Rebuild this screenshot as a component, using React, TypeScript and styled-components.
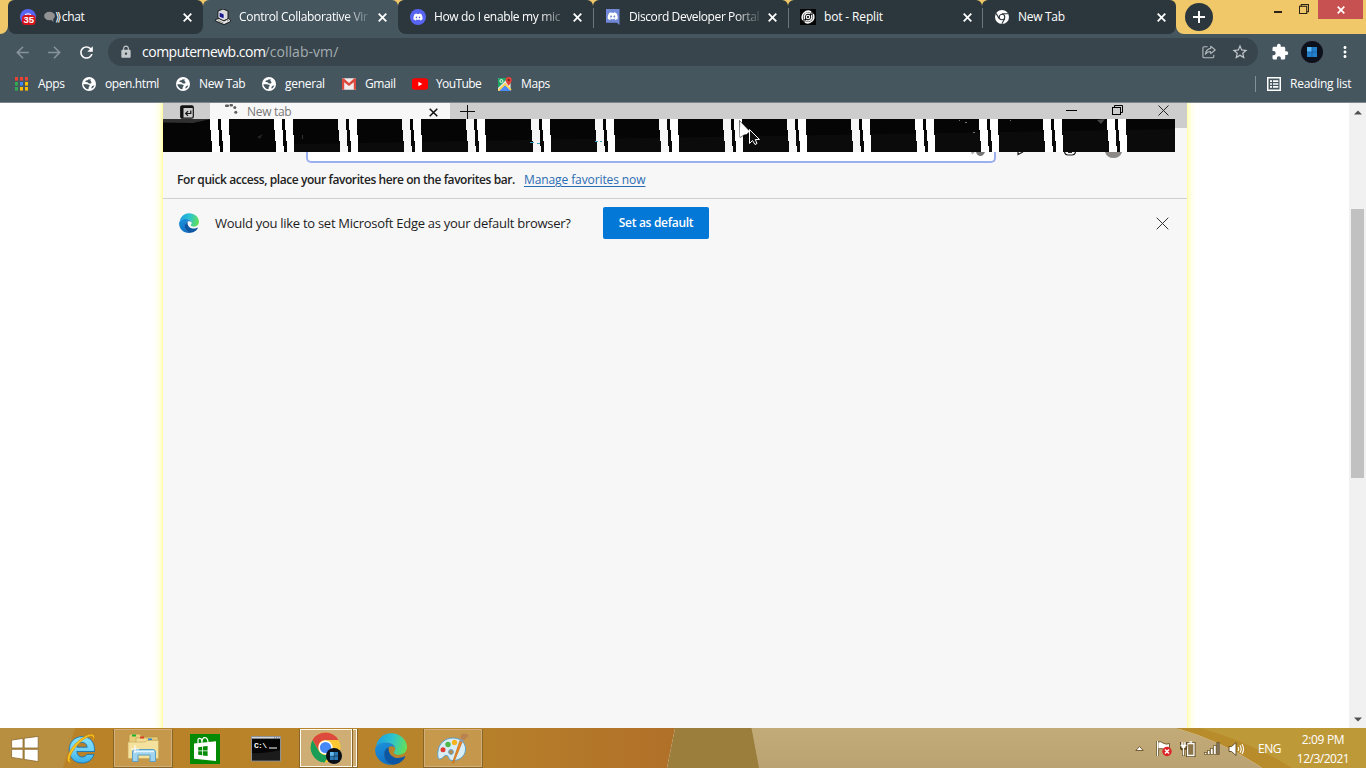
import React from "react";
import styled, { createGlobalStyle, css } from "styled-components";
import { FaDiscord } from "react-icons/fa";
import { MdArrowBack, MdArrowForward, MdRefresh, MdLock, MdStarBorder, MdExtension, MdMoreVert } from "react-icons/md";

const GlobalStyle = createGlobalStyle`
  *, *::before, *::after { box-sizing: border-box; }
  html, body { margin: 0; padding: 0; }
  body {
    width: 1366px;
    height: 768px;
    overflow: hidden;
    font-family: "Open Sans", "Noto Sans", sans-serif;
    font-size: 12px;
    color: #fff;
  }
  svg { display: block; flex: none; }
`;

const Screen = styled.div`
  width: 1366px;
  height: 768px;
  display: flex;
  flex-direction: column;
  overflow: hidden;
  background: #fff;
`;

/* ---------- shared text ---------- */

const Label = styled.span<{ $w?: number; $track?: number; $size?: number; $color?: string; $weight?: number }>`
  display: block;
  flex: none;
  white-space: nowrap;
  line-height: 18px;
  width: ${(p) => (p.$w ? `${p.$w}px` : "auto")};
  letter-spacing: ${(p) => p.$track ?? -0.3}px;
  font-size: ${(p) => p.$size ?? 12}px;
  font-weight: ${(p) => p.$weight ?? 400};
  color: ${(p) => p.$color ?? "#fff"};
`;

/* ---------- tab strip ---------- */

const Strip = styled.header`
  height: 34px;
  flex: none;
  display: flex;
  background: linear-gradient(#f0c869, #f0c869) 0 0 / 100% 26px no-repeat, #45565f;
`;

const StripEdge = styled.div<{ $side: "left" | "right" }>`
  height: 34px;
  background: #f0c869;
  ${(p) =>
    p.$side === "left"
      ? css`width: 8px; flex: none; border-bottom-right-radius: 8px;`
      : css`flex: 1; border-bottom-left-radius: 8px; display: flex; align-items: flex-start;`}
`;

const TabBox = styled.div<{ $w: number; $active?: boolean; $edges?: string; $sep?: boolean }>`
  position: relative;
  width: ${(p) => p.$w}px;
  height: 34px;
  flex: none;
  padding-left: 12px;
  display: flex;
  align-items: center;
  background: ${(p) => (p.$active ? "#45565f" : "#2c373d")};
  border-radius: 6px 6px ${(p) => p.$edges ?? "0 0"};
  &::before {
    content: "";
    position: absolute;
    left: 0;
    top: 8px;
    width: 1px;
    height: 20px;
    background: ${(p) => (p.$sep ? "#6b767c" : "transparent")};
  }
`;

const TabIcon = styled.div`
  width: 24px;
  flex: none;
`;

const TabTitle = styled.div<{ $fade?: boolean }>`
  width: 139px;
  display: flex;
  align-items: center;
  flex: none;
  ${(p) => p.$fade && css`mask-image: linear-gradient(90deg, #000 106px, transparent 134px);`}
`;

const NewTabButton = styled.div`
  width: 28px;
  height: 28px;
  margin: 3px 0 0 9px;
  border-radius: 50%;
  background: #2c373d;
  display: flex;
  align-items: center;
  justify-content: center;
`;

const WindowButtons = styled.div`
  margin-left: auto;
  display: flex;
  align-items: flex-start;
`;

const WinClose = styled.div`
  width: 45px;
  height: 19px;
  margin-right: 3px;
  background: #c75050;
  display: flex;
  align-items: center;
  justify-content: center;
`;

/* ---------- toolbar ---------- */

const Toolbar = styled.div`
  height: 34px;
  flex: none;
  background: #45565f;
  display: flex;
  align-items: center;
  padding: 2px 12px 0 13px;
`;

const NavIcon = styled.div<{ $dim?: boolean; $gap?: number }>`
  width: 18px;
  height: 18px;
  margin-right: ${(p) => p.$gap ?? 14}px;
  color: ${(p) => (p.$dim ? "#87939a" : "#fff")};
  flex: none;
`;

const Omnibox = styled.div`
  width: 1150px;
  height: 28px;
  flex: none;
  margin-right: 13px;
  padding: 0 9px 0 11px;
  border-radius: 14px;
  background: #38454c;
  display: flex;
  align-items: center;
  color: #c3c8cb;
`;

const UrlText = styled.div`
  margin-left: 9px;
  display: flex;
`;

const OmniboxActions = styled.div`
  margin-left: auto;
  display: flex;
  align-items: center;
  gap: 15px;
`;

const Avatar = styled.div`
  width: 22px;
  height: 22px;
  margin: 0 13px 0 12px;
  border-radius: 50%;
  background: #0d111b;
  display: flex;
  align-items: center;
  justify-content: center;
`;

const Bookmarks = styled.nav`
  height: 35px;
  flex: none;
  background: #45565f;
  border-bottom: 1px solid #7b868c;
  display: flex;
  align-items: center;
  padding: 0 14px 2px 15px;
`;

const BookmarkIcon = styled.div<{ $after: number }>`
  flex: none;
  margin-right: ${(p) => p.$after}px;
`;

const ReadingList = styled.div`
  margin-left: auto;
  display: flex;
  align-items: center;
  height: 16px;
  padding-left: 11px;
  border-left: 1px solid #84919a;
`;

/* ---------- page with the remote display ---------- */

const Page = styled.main`
  height: 625px;
  flex: none;
  display: flex;
  justify-content: space-between;
  overflow: hidden;
  background: #fff;
`;

const Remote = styled.section`
  width: 1024px;
  margin-left: 163px;
  height: 640px;
  background: #f7f7f7;
  box-shadow: 0 0 2px 1px #ffffa0, 0 0 8px 2px #ffffb0;
  display: flex;
  flex-direction: column;
  color: #1b1b1b;
`;

const RemoteTitle = styled.div`
  height: 16px;
  flex: none;
  display: flex;
  background: #cdcdcd;
  overflow: hidden;
`;

const RemotePin = styled.div`
  width: 47px;
  padding: 2px 0 0 17px;
`;

const RemoteTab = styled.div`
  width: 240px;
  background: #f7f7f7;
  display: flex;
  padding: 0 12px 0 14px;
`;

const RemoteTabIcon = styled.div`
  width: 23px;
`;

const RemoteTabClose = styled.div`
  margin: 5px 0 0 auto;
`;

const RemotePlus = styled.div`
  padding: 2px 0 0 10px;
`;

const RemoteWindow = styled.div`
  margin-left: auto;
  display: flex;
  padding-right: 18px;
  gap: 35px;
`;

const GlitchRow = styled.div`
  height: 33px;
  flex: none;
  background: linear-gradient(#cdcdcd, #cdcdcd) 0 0 / 100% 9px no-repeat;
`;

const AddressRow = styled.div`
  height: 15px;
  flex: none;
  display: flex;
  padding-left: 143px;
`;

const AddressField = styled.div`
  width: 690px;
  height: 11px;
  background: #fff;
  border: 2px solid #9cb0f0;
  border-top: 0;
  border-radius: 0 0 5px 5px;
  display: flex;
  justify-content: flex-end;
  padding-right: 9px;
`;

const AddressIcons = styled.div`
  margin-left: 20px;
`;

const FavoritesRow = styled.div`
  height: 32px;
  flex: none;
  padding: 4px 0 0 14px;
  display: flex;
  border-bottom: 1px solid #cfcfcf;
`;

const Link = styled(Label)`
  text-decoration: underline;
  text-decoration-thickness: 1px;
  text-underline-offset: 2px;
`;

const Prompt = styled.div`
  height: 48px;
  flex: none;
  padding: 0 18px 0 16px;
  display: flex;
  align-items: center;
`;

const PromptIcon = styled.div`
  width: 36px;
`;

const PromptText = styled(Label)`
  padding-bottom: 1px;
`;

const DefaultButton = styled.button`
  width: 106px;
  height: 32px;
  margin-left: 32px;
  padding: 0;
  border: 0;
  border-radius: 2px;
  background: #0478d7;
  font-family: inherit;
  display: flex;
  justify-content: center;
  align-items: center;
`;

const PromptClose = styled.div`
  margin-left: auto;
`;

const Scrollbar = styled.div`
  width: 17px;
  height: 625px;
  background: #f1f1f1;
  display: flex;
  flex-direction: column;
  align-items: center;
  padding: 7px 0 6px;
`;

const Thumb = styled.div`
  width: 13px;
  height: 269px;
  margin-top: 94px;
  margin-bottom: auto;
  background: #c1c1c1;
`;

/* ---------- taskbar ---------- */

const Taskbar = styled.footer`
  position: relative;
  z-index: 0;
  height: 40px;
  flex: none;
  display: flex;
  align-items: stretch;
  border-top: 1px solid rgba(90, 55, 10, 0.4);
`;

const Backdrop = styled.svg`
  position: absolute;
  z-index: -1;
  left: 0;
  top: -1px;
`;

const TaskItem = styled.div<{ $w: number; $before?: number; $look?: "open" | "front" }>`
  width: ${(p) => p.$w}px;
  margin-left: ${(p) => p.$before ?? 0}px;
  flex: none;
  display: flex;
  align-items: center;
  justify-content: center;
  ${(p) =>
    p.$look === "open" &&
    css`
      background: rgba(215, 180, 120, 0.45);
      border: 1px solid #8b6526;
      border-top: 0;
      box-shadow: inset 0 0 0 1px #cfae78;
    `}
  ${(p) =>
    p.$look === "front" &&
    css`
      background: #cfae76;
      border: 1px solid #8b6526;
      border-top: 0;
      box-shadow: inset 0 0 0 1px #fdf8ec;
    `}
`;

const TaskStack = styled.div`
  width: 5px;
  border: 1px solid #8b6526;
  border-left: 0;
  border-top: 0;
  box-shadow: inset -1px 0 0 #fdf8ec, inset 0 1px 0 #fdf8ec, inset 0 -1px 0 #fdf8ec;
  background: #cfae76;
`;

const Tray = styled.div`
  margin-left: auto;
  display: flex;
  align-items: center;
`;

const TrayIcon = styled.div<{ $w: number }>`
  width: ${(p) => p.$w}px;
`;

const Clock = styled.div`
  width: 86px;
  height: 36px;
  display: flex;
  flex-direction: column;
  align-items: center;
  justify-content: space-between;
`;

const ClockLine = styled(Label)`
  line-height: 17px;
`;

/* ---------- drawings ---------- */

const Cross = ({ s = 9, w = 1.8, c = "#fff" }: { s?: number; w?: number; c?: string }) => (
  <svg width={s} height={s} viewBox={`0 0 ${s} ${s}`}>
    <path d={`M.7 .7L${s - 0.7} ${s - 0.7}M${s - 0.7} .7L.7 ${s - 0.7}`} stroke={c} strokeWidth={w} />
  </svg>
);

const ChatFavicon = () => (
  <svg width="16" height="16" viewBox="0 0 16 16">
    <circle cx="8" cy="8" r="8" fill="#5865f2" />
    <path d="M5 5.5Q8 4 11 5.5" stroke="#fff" fill="none" />
    <rect x="2" y="6" width="13.5" height="10" rx="3.5" fill="#d8131c" />
    <text x="8.8" y="14.3" textAnchor="middle" fontSize="9.5" fontWeight="700" fill="#fff" fontFamily="Liberation Sans, sans-serif">35</text>
  </svg>
);

const SpeechBubble = () => (
  <svg width="11" height="12" viewBox="0 0 11 12">
    <ellipse cx="5.5" cy="5" rx="5.4" ry="4.2" fill="#929292" />
    <path d="M6 8L9.5 11L9 7.5Z" fill="#929292" />
  </svg>
);

const ComputerIcon = () => (
  <svg width="16" height="16" viewBox="0 0 16 16">
    <path d="M3 2L8 0L13 2V10L8 12L3 9Z" fill="#d9d9d9" stroke="#111" strokeWidth=".9" />
    <path d="M4.2 3.2L9 5V9.8L4.2 8Z" fill="#1b1b8c" stroke="#fff" strokeWidth=".6" />
    <path d="M.6 10.5L4 9.5L9 12L13.5 9.5L15.5 11V12.5L9 15.6L.6 12Z" fill="#e8e8e8" stroke="#111" strokeWidth=".9" />
    <path d="M3 11.5L8.5 14M12 12L14 11" stroke="#777" strokeWidth=".8" />
  </svg>
);

const DiscordRound = () => (
  <svg width="16" height="16" viewBox="0 0 16 16">
    <circle cx="8" cy="8" r="8" fill="#5865f2" />
    <FaDiscord x={3} y={3} width={10} height={10} size={10} color="#fff" />
  </svg>
);

const DiscordSquare = () => (
  <svg width="16" height="16" viewBox="0 0 16 16">
    <path d="M1 0H14.5V16L11.8 13.7H1Z" fill="#7289da" />
    <FaDiscord x={2.2} y={1.7} width={11} height={11} size={11} color="#fff" />
  </svg>
);

const ReplitIcon = () => (
  <svg width="16" height="16" viewBox="0 0 16 16">
    <rect width="16" height="16" fill="#050505" />
    <g fill="none" stroke="#f4f4f4" strokeWidth="1.5" strokeLinecap="round">
      <circle cx="8" cy="8" r="1.7" strokeWidth="1.2" />
      <path d="M4.4 9.6A4 4 0 0 1 9.6 4.4M11.6 6.4A4 4 0 0 1 6.4 11.6" />
      <path d="M2.6 10.6A6.2 6.2 0 0 1 10.600 2.600M13.4 5.4A6.2 6.2 0 0 1 5.400 13.400" />
      <path d="M12.200 4.200Q11 4.200 10 3.600M3.800 11.800Q5 11.800 6 12.400" strokeWidth="1" />
    </g>
  </svg>
);

const ChromeMono = () => (
  <svg width="16" height="14" viewBox="0 0 16 14">
    <circle cx="8" cy="7" r="7" fill="#fff" />
    <circle cx="8" cy="7" r="2.75" fill="#fff" stroke="#2c373d" strokeWidth="1.1" />
    <path d="M8 3.8H14.2M5.2 8.6L2.1 3.4M10.8 8.6L7.8 13.9" stroke="#2c373d" strokeWidth="1.1" />
  </svg>
);

const AppsGrid = () => {
  const colors = ["#ea4335", "#ea4335", "#ea4335", "#34a853", "#4285f4", "#fbbc05", "#34a853", "#fbbc05", "#fbbc05"];
  return (
    <svg width="13" height="14" viewBox="0 0 13 14">
      {colors.map((c, i) => (
        <rect key={i} x={(i % 3) * 5} y={Math.floor(i / 3) * 5} width="3" height="3.6" fill={c} />
      ))}
    </svg>
  );
};

const Globe = () => (
  <svg width="14" height="14" viewBox="0 0 14 14">
    <circle cx="7" cy="7" r="7" fill="#fff" />
    <path d="M8.800 2.200L6.300 2.400Q5.800 3.400 4 3.600Q3 4.400 3.600 5Q5.800 4.800 6.200 6Q7.800 7 9.200 6.300Q10 5.600 9 4.600Q7.900 3.700 8.800 2.200Z" fill="#45565f" />
    <path d="M1.300 7.200H4.800Q7.600 7.500 7.800 8.600Q7.700 9.400 6.800 9.700L6.500 12.300Q2.400 11.900 1.300 7.200Z" fill="#45565f" />
    <path d="M9.800 9.600Q11 8.500 12.400 8.600Q11.600 10.700 9.800 11.800Q9 10.700 9.800 9.600Z" fill="#45565f" />
  </svg>
);

const GmailIcon = () => (
  <svg width="14" height="12" viewBox="0 0 14 12">
    <rect width="14" height="11.5" y=".3" rx="1" fill="#f1eded" />
    <path d="M0 1.3V11Q0 11.8 1 11.8H2.2V4.3L7 8L11.8 4.3V11.8H13Q14 11.8 14 11V1.3Q14 .3 13 .3H12.3L7 4.9L1.7 .3H1Q0 .3 0 1.3Z" fill="#dc4a3e" />
  </svg>
);

const YouTubeIcon = () => (
  <svg width="16" height="12" viewBox="0 0 16 12">
    <rect y=".3" width="16" height="11.4" rx="2.6" fill="#f00" />
    <path d="M6.4 3.7V8.3L10.3 6Z" fill="#fff" />
  </svg>
);

const MapsIcon = () => (
  <svg width="14" height="14" viewBox="0 0 14 14">
    <rect y="1" width="12.6" height="13" rx="1" fill="#e8eaed" />
    <path d="M0 2Q0 1 1 1H10L0 11Z" fill="#1fa463" />
    <path d="M1 14L7 8L12.6 13.500Q12.600 14 11.6 14Z" fill="#4c8bf5" />
    <path d="M.4 13.6L7 7L13 12.8" fill="none" stroke="#ffd04b" strokeWidth="1.7" />
    <circle cx="3.4" cy="4" r="1.5" fill="none" stroke="#fff" strokeWidth=".9" />
    <path d="M7.6 3.2A3.1 3.1 0 0 1 13.8 3.2Q13.8 5 10.7 8.8Q7.6 5 7.6 3.2Z" fill="#dc4437" />
    <circle cx="10.7" cy="3.2" r="1.1" fill="#7d231b" />
  </svg>
);

const ReadingIcon = () => (
  <svg width="14" height="14" viewBox="0 0 14 14">
    <rect x=".75" y=".75" width="12.5" height="12.5" fill="none" stroke="#fff" strokeWidth="1.5" />
    <path d="M3 4.2H5M6 4.2H11.3M3 7H5M6 7H11.3M3 9.8H5M6 9.8H11.3" stroke="#fff" strokeWidth="1.7" />
  </svg>
);

const ShareIcon = () => (
  <svg width="14" height="14" viewBox="0 0 14 14" fill="none" stroke="#b5bbbf" strokeWidth="1.1" strokeLinejoin="round">
    <path d="M5.5 1.7H2.2Q.9 1.7 .9 3V11.5Q.9 12.8 2.2 12.8H10.5Q11.8 12.8 11.8 11.5V9.8" />
    <path d="M8.7 1.2L13.2 5L8.7 8.7V6.7Q5.5 6.4 3.4 9.2Q4.2 4.2 8.7 3.4Z" />
  </svg>
);

const RestoreIcon = ({ s = 11, c = "#000", w = 1 }: { s?: number; c?: string; w?: number }) => (
  <svg width={s} height={s} viewBox="0 0 11 11" fill="none" stroke={c} strokeWidth={w}>
    <path d="M2.5 2.5V.5H10.5V8.5H8.5" />
    <rect x=".5" y="2.5" width="8" height="8" />
  </svg>
);

const MinButtonIcon = styled.svg`
  margin: 11px 17px 0 0;
`;

const RestoreHolder = styled.div`
  margin: 4px 9px 0 0;
`;

const EdgeLogo = ({ size, id }: { size: number; id: string }) => (
  <svg width={size} height={size} viewBox="0 0 32 32">
    <defs>
      <linearGradient id={`${id}a`} x1="0" y1=".3" x2="1" y2=".5">
        <stop offset="0" stopColor="#1b9de2" />
        <stop offset=".5" stopColor="#2cc3cf" />
        <stop offset="1" stopColor="#62e05a" />
      </linearGradient>
      <linearGradient id={`${id}b`} x1="0" y1="0" x2=".4" y2="1">
        <stop offset="0" stopColor="#1c93dd" />
        <stop offset="1" stopColor="#1170c4" />
      </linearGradient>
    </defs>
    <path d="M1 13A15.5 15.5 0 0 1 16 .2C25 .2 32 6.5 32 14C32 19 28 21.8 24 21.8C21 21.8 18.8 20.6 18.8 19.4C18.8 18.7 20.2 18 20.2 16C20.2 12.5 16.5 9.8 11.5 9.8C7 9.8 3 11 1 13Z" fill={`url(#${id}a)`} />
    <path d="M.1 17C.1 12.5 4.5 9.6 10.5 9.6C16 9.6 20.2 12.5 20.2 16C20.2 14.6 18.6 13.2 16.6 13.2C12.5 13.2 9.5 17 9.5 21.5C9.5 26.5 13.4 30.8 19 31.6C9 33.4 .1 26 .1 17Z" fill={`url(#${id}b)`} />
    <path d="M13.8 14Q9.2 16 9.2 21.5C9.2 26.5 13 31.3 19 31.7C24 31 28 28 30 24.2C30.3 23.5 29.7 23.1 29 23.5C20.5 27.8 12.3 22 13.8 14Z" fill="#0c56a3" />
  </svg>
);

const Glitch = () => {
  const stripes = Array.from({ length: 15 }, (_, i) => i);
  return (
    <svg width="1024" height="33" viewBox="0 0 1024 33">
      <rect width="1012" height="33" fill="#050505" />
      <path d="M0 0H48L30 4L0 3.5Z" fill="#303030" />
      <path d="M131 25L1012 10V33H131Z" fill="#0b0b0b" />
      {stripes.map((i) => {
        const x = Math.round(47 + i * 64.1);
        return (
          <g key={i} shapeRendering="crispEdges">
            <path
              d={`M${x} 0H${x + 8}V11H${x + 9}V27H${x + 10}V33H${x + 2}V22H${x + 1}V11H${x}Z`}
              fill={i > 1 && i < 11 ? "#f6f6f6" : "#fff"}
            />
            <path d={`M${x + 11} 0H${x + 19}V16H${x + 20}V33H${x + 13}V22H${x + 12}V11H${x + 11}Z`} fill="#fff" />
          </g>
        );
      })}
      <g fill="#777">
        <rect x="802" y="3" width="2" height="1" />
        <rect x="796" y="1" width="1" height="1" />
        <rect x="810" y="13" width="2" height="1" />
        <rect x="847" y="1" width="1" height="1" />
        <rect x="139" y="16" width="1" height="4" fill="#333" />
        <path d="M934 1L942 0L938 5Z" fill="#444" />
        <path d="M94 18L100 15L97 20Z" fill="#222" />
      </g>
      <path d="M367 23.5H371M374 24.5H377M432 22.5H435M437 22.5H439" stroke="#38a0c0" />
      <path d="M576.500 1.500L587 12.500L583.500 15.500L581 16L577 18.500Z" fill="#fff" stroke="#111" strokeWidth=".6" />
      <path d="M577 8H580L583 13L577 18Z" fill="#fff" />
      <path d="M586.5 10.5V24.5L589.5 21.5L592 25.5L594 24.5L592.3 20.5H596.5Z" fill="#111" stroke="#fff" />
    </svg>
  );
};

const PinIcon = () => (
  <svg width="14" height="14" viewBox="0 0 14 14">
    <path d="M.7 2.5Q.7 .8 2.4 .8H11.6Q13.3 .8 13.3 2.5V11.5Q13.3 13.2 11.6 13.2H2.4Q.7 13.2 .7 11.5Z" fill="none" stroke="#111" strokeWidth="1.2" />
    <path d="M1 1H13V3H3.5V13H1Z" fill="#111" />
    <path d="M10.8 5.5V8.5H6M8 6.2L5.7 8.5L8 10.8" fill="none" stroke="#111" strokeWidth="1.2" />
  </svg>
);

const SpinnerDots = () => (
  <svg width="14" height="16" viewBox="0 0 14 16" fill="#5d5d5d">
    <rect x="1" y="1.5" width="4" height="2.400" rx="1" />
    <rect x="5.5" y="1" width="3.5" height="2.400" rx="1" />
    <circle cx="10.8" cy="4.500" r="1.5" />
    <circle cx="11.8" cy="9.3" r="1.5" />
  </svg>
);

const StartLogo = () => (
  <svg width="28" height="26" viewBox="0 0 28 26" stroke="#8c6a2e" strokeWidth=".8">
    <path d="M.6 4.1L12 2.4V12H.6ZM13.2 2.2L27.2 .4V12H13.2ZM.6 13.3H12V23.2L.6 21.4ZM13.2 13.3H27.2V25.6L13.2 23.4Z" fill="#fff" />
  </svg>
);

const IeLogo = () => (
  <svg width="30" height="31" viewBox="0 0 30 31">
    <defs>
      <linearGradient id="ie" x1="0" y1="0" x2="0" y2="1">
        <stop offset="0" stopColor="#86e2fc" />
        <stop offset=".5" stopColor="#6fd2f6" />
        <stop offset="1" stopColor="#37aee8" />
      </linearGradient>
    </defs>
    <path d="M28.5 18.5H10.8C11.2 22 13.2 24 16.2 24C18.4 24 20 23 20.8 21.4H28C26.4 26.7 22 30 16 30C8.5 30 3.2 24.7 3.2 17C3.2 9.2 8.7 3.6 16.2 3.6C24 3.6 29.2 9.4 28.5 18.5ZM10.9 14.2H21.2C20.8 11.2 18.9 9.4 16.1 9.4C13.3 9.4 11.4 11.2 10.9 14.2Z" fill="url(#ie)" stroke="#1a74b2" strokeWidth=".9" />
    <path d="M27 8C29.5 3.2 28.2 1 24.6 1.3C19 1.8 9.5 9 4.5 17.2C.2 24.4 .3 30.4 5.5 29.3C2.8 28.6 3.2 24 6.8 18.2C11.3 11 18.6 4.6 23.8 3.2C26.8 2.4 27.6 4.2 27 8Z" fill="#fbc51e" stroke="#c98a10" strokeWidth=".6" />
  </svg>
);

const FolderLogo = () => (
  <svg width="32" height="30" viewBox="0 0 32 30">
    <path d="M2 3L3 1H13L15 4H31V24H2Z" fill="#e9cf7c" stroke="#b99543" strokeWidth=".8" />
    <path d="M9 5H21L22 7H31V24H9Z" fill="#f2dd96" stroke="#c4a352" strokeWidth=".7" />
    <rect x="5" y="1.500" width="4" height="2" fill="#16b32b" />
    <rect x="13" y="3.500" width="4" height="2" fill="#dc4226" />
    <rect x="21" y="5.500" width="4" height="2" fill="#2a87dc" />
    <path d="M1 9H18L20 7.5H31.5V25.5H1Z" fill="#f4e19d" stroke="#c9ab5c" strokeWidth=".7" />
    <path d="M5.5 28.5V19Q5.5 16.5 8 16.5H26Q28.5 16.5 28.5 19V28.5H23V22H11V28.5Z" fill="#9fd3ee" stroke="#5a9fc6" />
    <path d="M7 18.5H27" stroke="#e2f6ff" strokeWidth="1.5" />
    <path d="M8 12V20M4 16H12" stroke="#fff" strokeWidth="1" />
  </svg>
);

const StoreLogo = () => (
  <svg width="30" height="30" viewBox="0 0 30 30">
    <rect width="30" height="30" fill="#058a05" />
    <path d="M4 9.5L26 7.2V27L4 24.7Z" fill="#fff" />
    <path d="M8 9V5.5Q9 3.6 11 4.8Q12 5.5 12 9M12 8Q12.2 3.4 15 3.6Q17.8 4 18 8" fill="none" stroke="#fff" strokeWidth="1.2" />
    <path d="M8.2 13.2L12 12.7V16.5H8.2ZM12.8 12.6L17.6 12V16.5H12.8ZM8.2 17.3H12V21.2L8.2 20.7ZM12.8 17.3H17.6V22L12.8 21.4Z" fill="#058a05" />
  </svg>
);

const TerminalLogo = () => (
  <svg width="30" height="26" viewBox="0 0 30 26">
    <rect x=".5" y=".5" width="29" height="24.5" fill="#050505" stroke="#8e9296" />
    <rect x="1" y="1" width="28" height="1.600" fill="#cfd4da" />
    <path d="M23 2H24M25 2H26M27 2H28" stroke="#4a5a78" />
    <path d="M1 24L29 24L29 14Q15 18 1 17Z" fill="#1b1b1b" />
    <text x="3" y="11.500" fontSize="8" fontWeight="700" textLength="13" fill="#fff" fontFamily="Liberation Mono, monospace">C:\</text>
    <path d="M18 12H26" stroke="#fff" />
  </svg>
);

const ChromeLogo = () => (
  <svg width="32" height="32" viewBox="0 0 32 32">
    <circle cx="15.5" cy="15.5" r="15" fill="#fbc733" />
    <path d="M2.5 8A15 15 0 0 1 28.5 8H15.5A7.5 7.5 0 0 0 8.9 11.8L8.6 18.6Z" fill="#dc4a3d" />
    <path d="M2.5 8A15 15 0 0 0 14.5 30.5L21.8 19.6A7.5 7.5 0 0 1 9 19.2Z" fill="#1a9e57" />
    <circle cx="15.5" cy="15.5" r="7.1" fill="#fff" />
    <circle cx="15.5" cy="15.5" r="5.6" fill="#4688f4" />
    <circle cx="24" cy="24" r="8" fill="#0b0f19" />
    <path d="M20 20H23.800V23.800H20ZM24.200 20H28V23.800H24.200ZM20 24.200H23.800V28H20ZM24.200 24.200H28V28H24.200Z" fill="#2b79b8" />
    <path d="M20 20H23.800V23.800H20Z" fill="#62b8ee" />
  </svg>
);

const PaintLogo = () => (
  <svg width="32" height="32" viewBox="0 0 32 32">
    <path d="M16 6C24 6 29 11 28.5 18C28 25 21 29 15 28.5C11 28 12.5 24.5 10 23.5C7 22.5 6 27 2.5 27C.5 27 .5 22 1 19C2 11 8.500 6 16 6Z" fill="#d9edf6" stroke="#5a9fca" />
    <circle cx="14" cy="20" r="2.4" fill="#b48b4e" stroke="#6aa3c4" />
    <circle cx="6" cy="17.800" r="2.5" fill="#e03c33" />
    <circle cx="11" cy="12.500" r="2.7" fill="#4db848" />
    <circle cx="17.500" cy="10.500" r="2.7" fill="#f8b420" />
    <path d="M25.500 9L16.500 31L15.600 30.500L23 8.500Z" fill="#f08a24" stroke="#c26512" strokeWidth=".7" />
    <path d="M22.500 9.500L26 10.500L27 7.500L24 6.500Z" fill="#8d9aa6" />
    <path d="M24 6.800Q23 3 25 2Q29 .5 32 4Q29 5 27.500 8Z" fill="#b9824e" />
  </svg>
);

const FlagIcon = () => (
  <svg width="16" height="17" viewBox="0 0 16 17">
    <path d="M1.500 1V16" stroke="#5b4318" strokeWidth="2.600" />
    <path d="M2 2Q5 1 7 3Q10 5 13.500 3.500V9.500Q10 11 7 9Q5 8 2 9Z" fill="#fff" stroke="#5b4318" strokeWidth=".8" />
    <path d="M1.500 1V16" stroke="#fff" strokeWidth="1.300" />
    <circle cx="11" cy="11.500" r="4.700" fill="#dd2326" />
    <path d="M9 9.500L13 13.500M13 9.500L9 13.500" stroke="#fff" strokeWidth="1.500" />
  </svg>
);

const BatteryIcon = () => (
  <svg width="16" height="16" viewBox="0 0 16 16" fill="none">
    <path d="M7.500 2.500H14V14.500H7.500Z" stroke="#5b4318" strokeWidth="3" />
    <path d="M7.500 2.500H14V14.500H7.500Z" fill="#8c7548" stroke="#fff" strokeWidth="1.300" />
    <path d="M9.500 1H12" stroke="#fff" strokeWidth="1.500" />
    <path d="M1 1V6Q1 8.500 3.500 8.500V15M3.500 8Q6 8 6 6V1" stroke="#5b4318" strokeWidth="2.600" />
    <path d="M2 1V4M5 1V4M.5 4.500H6.500M1.500 6H5.500M3.500 6V14.500" stroke="#fff" strokeWidth="1.400" />
  </svg>
);

const SignalIcon = () => (
  <svg width="16" height="13" viewBox="0 0 16 13">
    {[2, 4, 6, 9, 12].map((h, i) => (
      <rect key={h} x={i * 3.1 + 0.4} y={12.500 - h} width="2.400" height={h} fill={i < 4 ? "#fff" : "#837a68"} stroke="#6a5326" strokeWidth=".7" />
    ))}
  </svg>
);

const SpeakerIcon = () => (
  <svg width="17" height="16" viewBox="0 0 17 16">
    <path d="M1 5.500H3.500L8 1.500V14.500L3.500 10.500H1Z" fill="#fff" stroke="#5b4318" strokeWidth=".9" />
    <path d="M10 6Q11.300 8 10 10M12 4.300Q14.300 8 12 11.700M14 3Q17 8 14 13" fill="none" stroke="#fff" strokeWidth="1.100" />
  </svg>
);

const Wallpaper = () => (
  <Backdrop width="1366" height="40" viewBox="0 0 1366 40">
    <defs>
      <linearGradient id="orange">
        <stop offset="0" stopColor="#b98128" />
        <stop offset=".6" stopColor="#b8842b" />
        <stop offset="1" stopColor="#b17028" />
      </linearGradient>
      <linearGradient id="sand" x1="0" y1="0" x2="0" y2="1">
        <stop offset="0" stopColor="#c3ab78" />
        <stop offset="1" stopColor="#bba272" />
      </linearGradient>
    </defs>
    <rect width="80" height="40" fill="#b88f40" />
    <path d="M75 0H675L667 40H63Z" fill="url(#orange)" />
    <path d="M675 0H752L760 40H667Z" fill="#9b7d3c" />
    <path d="M751.500 0H1176Q1225 14 1262 40H759Z" fill="url(#sand)" />
    <path d="M1176 0H1366V40H1262Q1225 14 1176 0Z" fill="#b98c2b" />
    <path d="M1200 0H1366V40H1292Q1250 14 1200 0Z" fill="#be9938" />
  </Backdrop>
);

const Arrow = ({ up }: { up?: boolean }) => (
  <svg width="8" height="5" viewBox="0 0 8 5">
    <path d={up ? "M0 4.500L4 .5L8 4.500Z" : "M0 .5L4 4.500L8 .5Z"} fill="#505050" />
  </svg>
);

/* ---------- data ---------- */

type TabInfo = {
  icon: React.ReactNode;
  title: string;
  w: number;
  track?: number;
  active?: boolean;
  fade?: boolean;
  edges?: string;
  sep?: boolean;
  bubble?: boolean;
};

const tabs: TabInfo[] = [
  { icon: <ChatFavicon />, title: "⟫chat", w: 195, bubble: true, edges: "8px 8px" },
  { icon: <ComputerIcon />, title: "Control Collaborative Vir", w: 195, active: true, fade: true, track: -0.32 },
  { icon: <DiscordRound />, title: "How do I enable my mic", w: 195, fade: true, edges: "0 8px", track: -0.35 },
  { icon: <DiscordSquare />, title: "Discord Developer Portal", w: 195, fade: true, sep: true, track: -0.4 },
  { icon: <ReplitIcon />, title: "bot - Replit", w: 194, sep: true, track: -0.15 },
  { icon: <ChromeMono />, title: "New Tab", w: 194, edges: "8px 0", sep: true },
];

const bookmarks = [
  { icon: <AppsGrid />, gap: 10, text: "Apps", w: 44 },
  { icon: <Globe />, gap: 9, text: "open.html", w: 71, track: -0.4 },
  { icon: <Globe />, gap: 9, text: "New Tab", w: 63, track: -0.35 },
  { icon: <Globe />, gap: 9, text: "general", w: 57 },
  { icon: <GmailIcon />, gap: 9, text: "Gmail", w: 47, track: -0.4 },
  { icon: <YouTubeIcon />, gap: 8, text: "YouTube", w: 62, track: -0.6 },
  { icon: <MapsIcon />, gap: 9, text: "Maps", w: 40, track: -0.4 },
];

export default function App() {
  return (
    <Screen>
      <GlobalStyle />
      <Strip>
        <StripEdge $side="left" />
        {tabs.map((t, i) => (
          <TabBox key={i} $w={t.w} $active={t.active} $edges={t.edges} $sep={t.sep}>
            <TabIcon>{t.icon}</TabIcon>
            <TabTitle $fade={t.fade}>
              {t.bubble && <SpeechBubble />}
              <Label $track={t.track}>{t.title}</Label>
            </TabTitle>
            <Cross />
          </TabBox>
        ))}
        <StripEdge $side="right">
          <NewTabButton>
            <svg width="12" height="12" viewBox="0 0 12 12">
              <path d="M6 0V12M0 6H12" stroke="#fff" strokeWidth="2" />
            </svg>
          </NewTabButton>
          <WindowButtons>
            <MinButtonIcon width="8" height="2">
              <rect width="8" height="2" fill="#2b2414" />
            </MinButtonIcon>
            <RestoreHolder>
              <RestoreIcon s={10} c="#2b2414" w={1.2} />
            </RestoreHolder>
            <WinClose>
              <Cross s={8} w={1.7} />
            </WinClose>
          </WindowButtons>
        </StripEdge>
      </Strip>

      <Toolbar>
        <NavIcon $dim><MdArrowBack size={19} /></NavIcon>
        <NavIcon $dim><MdArrowForward size={19} /></NavIcon>
        <NavIcon $gap={13}><MdRefresh size={19} /></NavIcon>
        <Omnibox>
          <MdLock size={14} />
          <UrlText>
            <Label $size={14} $track={-0.5} $w={122.5}>computernewb.com</Label>
            <Label $size={14} $track={0.05} $color="#a4adb2">/collab-vm/</Label>
          </UrlText>
          <OmniboxActions>
            <ShareIcon />
            <MdStarBorder size={18} />
          </OmniboxActions>
        </Omnibox>
        <MdExtension size={18} />
        <Avatar>
          <svg width="10" height="10" viewBox="0 0 10 10">
            <rect width="10" height="10" fill="#2480cc" />
            <rect width="4.800" height="4.800" fill="#58b6f2" />
            <path d="M5 0V10M0 5H10" stroke="#124a80" strokeWidth=".5" />
          </svg>
        </Avatar>
        <MdMoreVert size={18} />
      </Toolbar>

      <Bookmarks>
        {bookmarks.map((b, i) => (
          <React.Fragment key={i}>
            <BookmarkIcon $after={b.gap}>{b.icon}</BookmarkIcon>
            <Label $w={b.w} $track={b.track}>{b.text}</Label>
          </React.Fragment>
        ))}
        <ReadingList>
          <BookmarkIcon $after={9}><ReadingIcon /></BookmarkIcon>
          <Label $w={62} $track={-0.25}>Reading list</Label>
        </ReadingList>
      </Bookmarks>

      <Page>
        <Remote>
          <RemoteTitle>
            <RemotePin><PinIcon /></RemotePin>
            <RemoteTab>
              <RemoteTabIcon><SpinnerDots /></RemoteTabIcon>
              <Label $color="#777" $track={-0.3}>New tab</Label>
              <RemoteTabClose><Cross s={9} w={1.5} c="#111" /></RemoteTabClose>
            </RemoteTab>
            <RemotePlus>
              <svg width="15" height="14" viewBox="0 0 15 14">
                <path d="M7.500 0V14M0 6.500H15" stroke="#111" />
              </svg>
            </RemotePlus>
            <RemoteWindow>
              <svg width="11" height="16" viewBox="0 0 11 16"><path d="M0 7.500H11" stroke="#000" /></svg>
              <svg width="11" height="16" viewBox="0 0 11 16" fill="none" stroke="#000">
                <path d="M2.500 4.500V2.500H10.500V9.500H8.500" />
                <rect x=".5" y="4.500" width="8" height="7" />
              </svg>
              <svg width="11" height="16" viewBox="0 0 11 16"><path d="M.5 2.500L10.500 12.500M10.500 2.500L.5 12.500" stroke="#222" /></svg>
            </RemoteWindow>
          </RemoteTitle>
          <GlitchRow><Glitch /></GlitchRow>
          <AddressRow>
            <AddressField>
              <svg width="16" height="5" viewBox="0 0 16 5">
                <path d="M2 0L3 2.500L6 0Z" fill="#aaa" />
                <path d="M7 0H16Q14 4.500 11 4Q8 3.500 7 0Z" fill="#777" />
              </svg>
            </AddressField>
            <AddressIcons>
              <svg width="110" height="7" viewBox="0 0 110 7">
                <path d="M2 0V2.500L7 0" fill="none" stroke="#222" strokeWidth="1.200" />
                <path d="M48.500 0Q49 3 52 3H56Q59 3 59.500 0M52 .5H56" fill="none" stroke="#222" strokeWidth="1.200" />
                <path d="M89 0H106Q104 6 97.500 6Q91 6 89 0Z" fill="#8c8987" />
              </svg>
            </AddressIcons>
          </AddressRow>
          <FavoritesRow>
            <Label $w={347} $weight={600} $color="#222" $track={-0.42}>For quick access, place your favorites here on the favorites bar.</Label>
            <Link $color="#2a6cb4" $track={-0.1}>Manage favorites now</Link>
          </FavoritesRow>
          <Prompt>
            <PromptIcon><EdgeLogo size={20} id="p" /></PromptIcon>
            <PromptText $w={356} $size={13} $color="#1c1c1c" $track={-0.28}>Would you like to set Microsoft Edge as your default browser?</PromptText>
            <DefaultButton>
              <Label $weight={600} $track={-0.3}>Set as default</Label>
            </DefaultButton>
            <PromptClose><Cross s={13} w={1} c="#333" /></PromptClose>
          </Prompt>
        </Remote>
        <Scrollbar>
          <Arrow up />
          <Thumb />
          <Arrow />
        </Scrollbar>
      </Page>

      <Taskbar>
        <Wallpaper />
        <TaskItem $w={28} $before={11}><StartLogo /></TaskItem>
        <TaskItem $w={32} $before={26}><IeLogo /></TaskItem>
        <TaskItem $w={60} $before={16} $look="open"><FolderLogo /></TaskItem>
        <TaskItem $w={30} $before={17}><StoreLogo /></TaskItem>
        <TaskItem $w={30} $before={31}><TerminalLogo /></TaskItem>
        <TaskItem $w={54} $before={18} $look="front"><ChromeLogo /></TaskItem>
        <TaskStack />
        <TaskItem $w={32} $before={17}><EdgeLogo size={32} id="t" /></TaskItem>
        <TaskItem $w={60} $before={16} $look="open"><PaintLogo /></TaskItem>
        <Tray>
          <TrayIcon $w={21}>
            <svg width="9" height="7" viewBox="0 0 9 7">
              <path d="M.8 5.500L4.500 1.500L8.200 5.500Z" fill="#fff" stroke="#5b4318" strokeWidth=".8" />
            </svg>
          </TrayIcon>
          <TrayIcon $w={24}><FlagIcon /></TrayIcon>
          <TrayIcon $w={24}><BatteryIcon /></TrayIcon>
          <TrayIcon $w={24}><SignalIcon /></TrayIcon>
          <TrayIcon $w={30}><SpeakerIcon /></TrayIcon>
          <Label $w={22} $track={-0.5}>ENG</Label>
          <Clock>
            <ClockLine $track={-0.35}>2:09 PM</ClockLine>
            <ClockLine $track={-0.5}>12/3/2021</ClockLine>
          </Clock>
        </Tray>
      </Taskbar>
    </Screen>
  );
}
